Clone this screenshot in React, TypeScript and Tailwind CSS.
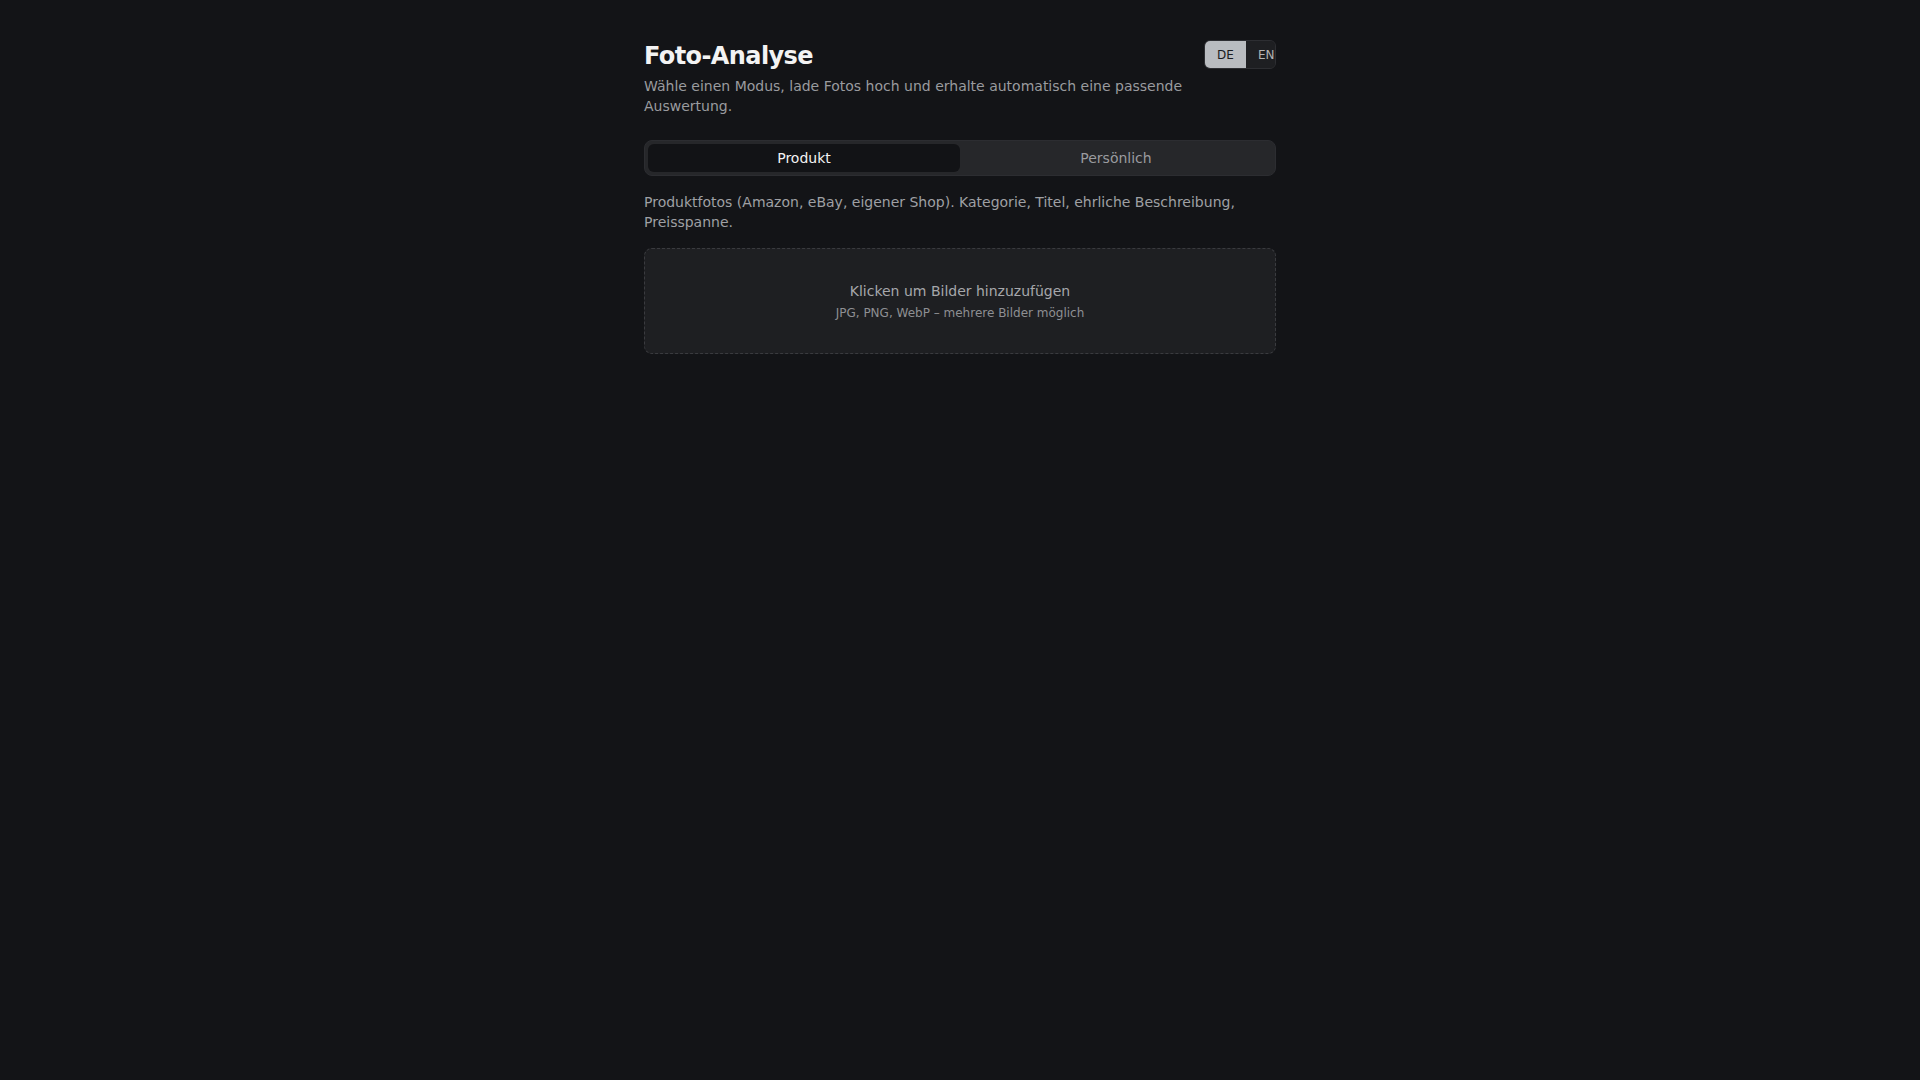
import React, { useState } from "react";

type Mode = "produkt" | "persoenlich";
type Lang = "DE" | "EN";

const FONT = { fontFamily: '"DejaVu Sans", "Noto Sans", sans-serif' };

export default function App() {
  const [mode, setMode] = useState<Mode>("produkt");
  const [lang, setLang] = useState<Lang>("DE");

  return (
    <div className="min-h-screen w-full bg-[#131417] text-[#ededed]" style={FONT}>
      <main className="mx-auto w-[632px] pt-10">
        {/* Header */}
        <header className="flex items-start justify-between gap-4">
          <div className="min-w-0">
            <h1 className="text-2xl font-bold leading-8 tracking-tight text-[#f3f3f3]">
              Foto-Analyse
            </h1>
            <p className="mt-1 text-sm leading-5 text-[#9a9b9f]">
              Wähle einen Modus, lade Fotos hoch und erhalte automatisch eine passende Auswertung.
            </p>
          </div>
          <div className="flex h-[29px] w-[72px] shrink-0 overflow-hidden rounded-md border border-[#2d2e32] bg-[#1e1f22]">
            <button
              onClick={() => setLang("DE")}
              className={
                lang === "DE"
                  ? "h-full w-[41px] shrink-0 bg-[#b9bcc0] text-xs leading-4 text-[#1a1b1e]"
                  : "h-full w-[41px] shrink-0 bg-[#1e1f22] text-xs leading-4 text-[#b3b3b3]"
              }
            >
              DE
            </button>
            <button
              onClick={() => setLang("EN")}
              className={
                lang === "EN"
                  ? "h-full shrink-0 bg-[#b9bcc0] pl-3 text-left text-xs leading-4 text-[#1a1b1e]"
                  : "h-full shrink-0 bg-[#1e1f22] pl-3 text-left text-xs leading-4 text-[#b3b3b3]"
              }
            >
              EN
            </button>
          </div>
        </header>

        {/* Mode tabs */}
        <div className="mt-6 grid h-[36px] grid-cols-2 rounded-lg border border-[#2c2d31] bg-[#26272a] p-[3px]">
          <button
            onClick={() => setMode("produkt")}
            className={
              mode === "produkt"
                ? "rounded-md bg-[#121316] text-sm text-[#f2f2f2]"
                : "rounded-md text-sm text-[#9a9b9f]"
            }
          >
            Produkt
          </button>
          <button
            onClick={() => setMode("persoenlich")}
            className={
              mode === "persoenlich"
                ? "rounded-md bg-[#121316] text-sm text-[#f2f2f2]"
                : "rounded-md text-sm text-[#9a9b9f]"
            }
          >
            Persönlich
          </button>
        </div>

        <p className="mt-4 text-sm leading-5 text-[#9fa0a4]">
          Produktfotos (Amazon, eBay, eigener Shop). Kategorie, Titel, ehrliche Beschreibung,
          Preisspanne.
        </p>

        {/* Upload area */}
        <label className="mt-4 flex cursor-pointer flex-col items-center rounded-lg border border-dashed border-[#3a3b3f] bg-[#1e1f22] py-8 text-center">
          <input type="file" accept="image/jpeg,image/png,image/webp" multiple className="hidden" />
          <span className="text-sm leading-5 text-[#a6a7ab]">Klicken um Bilder hinzuzufügen</span>
          <span className="mt-1 text-xs leading-4 text-[#8e8f93]">
            JPG, PNG, WebP – mehrere Bilder möglich
          </span>
        </label>
      </main>
    </div>
  );
}
